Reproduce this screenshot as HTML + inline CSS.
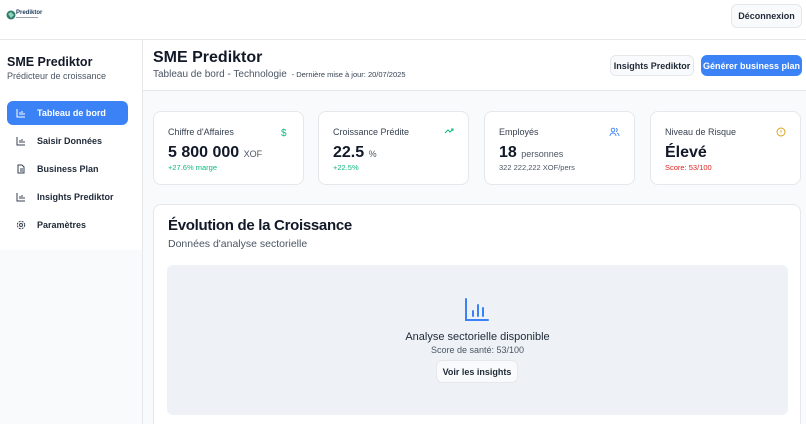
<!DOCTYPE html>
<html><head><meta charset="utf-8"><style>
*{box-sizing:border-box;margin:0;padding:0}
html,body{width:806px;height:424px;overflow:hidden}
body{font-family:"Liberation Sans",sans-serif;background:#f8fafc;color:#1f2937;position:relative}
.top{position:absolute;left:0;top:0;width:806px;height:40px;background:#fff;border-bottom:1px solid #e5e7eb}
.btn{position:absolute;border:1px solid #e5e7eb;background:#f9fafb;border-radius:6px;font-size:9px;font-weight:bold;color:#1f2937;display:flex;align-items:center;justify-content:center;white-space:nowrap}
.side{position:absolute;left:0;top:40px;width:143px;height:210px;background:#fff;border-right:1px solid #e5e7eb}
.sidebg{position:absolute;left:0;top:250px;width:143px;height:174px;background:#f8fafc;border-right:1px solid #e5e7eb}
.nav{position:absolute;left:7px;width:121px;height:24px;border-radius:6px;font-size:9px;font-weight:bold;display:flex;align-items:center;padding-left:30px;color:#1f2937;white-space:nowrap}
.nav svg{position:absolute;left:9px;top:7px}
.mh{position:absolute;left:143px;top:40px;width:663px;height:51px;background:#fff;border-bottom:1px solid #e5e7eb}
.card{position:absolute;top:111px;height:74px;background:#fff;border:1px solid #e5e7eb;border-radius:8px;width:151px}
.card .l{position:absolute;left:14px;top:15px;font-size:9px;color:#374151}
.card .v{position:absolute;left:14px;top:32px;font-size:16px;font-weight:bold;color:#111827;white-space:nowrap}
.card .v span{font-size:9px;font-weight:normal;color:#4b5563}
.card .s{position:absolute;left:14px;top:51px;font-size:7.5px}
.card svg{position:absolute;right:14px;top:15px}
</style></head><body>
<div class="top">
<svg style="position:absolute;left:6px;top:10px" width="10" height="10" viewBox="0 0 10 10"><circle cx="5" cy="5" r="4.5" fill="#2f7d6d"/><path d="M2 4l3-2 3 3-3 3z" fill="#8fd3b8"/></svg>
<div style="position:absolute;left:16px;top:10px;font-size:6px;font-weight:bold;color:#1f3b5a">Prediktor</div>
<div style="position:absolute;left:16px;top:17px;width:22px;height:1px;background:#9ca3af"></div>
<div class="btn" style="left:731px;top:4px;width:71px;height:24px">Déconnexion</div>
</div>
<div class="side">
<div style="position:absolute;left:7px;top:15px;font-size:12.5px;font-weight:bold;color:#111827">SME Prediktor</div>
<div style="position:absolute;left:7px;top:31px;font-size:9px;color:#4b5563">Prédicteur de croissance</div>
<div class="nav" style="top:61px;background:#3b82f6;color:#fff">
<svg width="10" height="10" viewBox="0 0 10 10" fill="none" stroke="#fff" stroke-width="1"><path d="M1 1v8h8M4 4v3M6 3v4M8 5v2"/></svg>Tableau de bord</div>
<div class="nav" style="top:89px"><svg width="10" height="10" viewBox="0 0 10 10" fill="none" stroke="#374151" stroke-width="1"><path d="M1 1v8h8M4 4v3M6 3v4M8 5v2"/></svg>Saisir Données</div>
<div class="nav" style="top:117px"><svg width="10" height="10" viewBox="0 0 10 10" fill="none" stroke="#374151" stroke-width="1"><path d="M2 1h4l2 2v6H2zM4 5h3M4 7h3"/></svg>Business Plan</div>
<div class="nav" style="top:145px"><svg width="10" height="10" viewBox="0 0 10 10" fill="none" stroke="#374151" stroke-width="1"><path d="M1 1v8h8M4 4v3M6 3v4M8 5v2"/></svg>Insights Prediktor</div>
<div class="nav" style="top:173px"><svg width="10" height="10" viewBox="0 0 10 10" fill="none" stroke="#374151" stroke-width="1"><circle cx="5" cy="5" r="1.5"/><circle cx="5" cy="5" r="3.7" stroke-dasharray="2 1"/></svg>Paramètres</div>
</div>
<div class="sidebg"></div>
<div class="mh">
<div style="position:absolute;left:10px;top:9px;font-size:16px;font-weight:bold;color:#111827">SME Prediktor</div>
<div style="position:absolute;left:10px;top:29px;font-size:10px;color:#4b5563;white-space:nowrap">Tableau de bord - Technologie <span style="font-size:7.5px;color:#374151">&nbsp;- Dernière mise à jour: 20/07/2025</span></div>
</div>
<div class="btn" style="left:610px;top:55px;width:84px;height:21px">Insights Prediktor</div>
<div class="btn" style="left:701px;top:55px;width:101px;height:21px;background:#3b82f6;border-color:#3b82f6;color:#fff">Générer business plan</div>

<div class="card" style="left:153px"><div class="l">Chiffre d'Affaires</div><svg width="8" height="10" viewBox="0 0 8 10"><text x="0" y="9" font-size="10" fill="#10b981" font-family="Liberation Sans">$</text></svg><div class="v">5 800 000 <span>XOF</span></div><div class="s" style="color:#10b981">+27.6% marge</div></div>
<div class="card" style="left:318px"><div class="l">Croissance Prédite</div><svg width="10" height="8" viewBox="0 0 10 8" fill="none" stroke="#10b981" stroke-width="1"><path d="M1 6l3-3 2 2 3-3M7 2h2v2"/></svg><div class="v">22.5 <span>%</span></div><div class="s" style="color:#10b981">+22.5%</div></div>
<div class="card" style="left:484px"><div class="l">Employés</div><svg width="11" height="10" viewBox="0 0 11 10" fill="none" stroke="#3b82f6" stroke-width="0.9"><circle cx="4" cy="3" r="1.8"/><path d="M1 9c0-2 1.5-3 3-3s3 1 3 3M7 1.3a1.8 1.8 0 010 3.4M8 6c1 .4 2 1.3 2 3"/></svg><div class="v">18 <span>personnes</span></div><div class="s" style="color:#4b5563">322 222,222 XOF/pers</div></div>
<div class="card" style="left:650px"><div class="l">Niveau de Risque</div><svg width="10" height="10" viewBox="0 0 10 10" fill="none" stroke="#d4a017" stroke-width="0.9"><circle cx="5" cy="5" r="4"/><path d="M5 3v2.5M5 6.8v.3"/></svg><div class="v">Élevé</div><div class="s" style="color:#dc2626">Score: 53/100</div></div>

<div style="position:absolute;left:153px;top:204px;width:648px;height:240px;background:#fff;border:1px solid #e5e7eb;border-radius:8px">
<div style="position:absolute;left:14px;top:12px;font-size:15px;font-weight:bold;color:#111827;letter-spacing:-0.3px">Évolution de la Croissance</div>
<div style="position:absolute;left:14px;top:33px;font-size:10.5px;color:#4b5563">Données d'analyse sectorielle</div>
<div style="position:absolute;left:13px;top:60px;width:621px;height:150px;background:#eef2f7;border-radius:6px">
<svg style="position:absolute;left:297px;top:32px" width="26" height="26" viewBox="0 0 26 26" fill="none" stroke="#3b82f6" stroke-width="2" stroke-linecap="round"><path d="M2 2v21h22M9 14v5M14 8v11M19 11v8"/></svg>
<div style="position:absolute;left:0;width:621px;top:66px;text-align:center;font-size:11px;color:#1f2937">Analyse sectorielle disponible</div>
<div style="position:absolute;left:0;width:621px;top:80px;text-align:center;font-size:9px;color:#4b5563">Score de santé: 53/100</div>
<div class="btn" style="left:269px;top:95px;width:82px;height:23px;background:#f9fafb">Voir les insights</div>
</div></div>
</body></html>
